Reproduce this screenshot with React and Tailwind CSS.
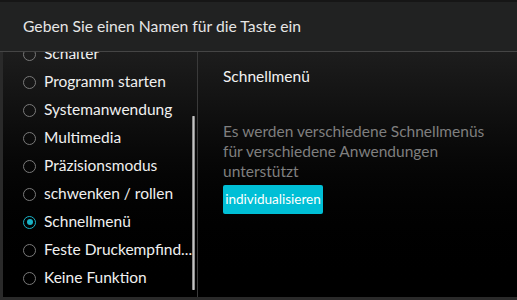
import React from "react";

const items = [
  "Schalter",
  "Programm starten",
  "Systemanwendung",
  "Multimedia",
  "Präzisionsmodus",
  "schwenken / rollen",
  "Schnellmenü",
  "Feste Druckempfind...",
  "Keine Funktion",
];

function Radio({ checked }) {
  return (
    <span
      className={`flex items-center justify-center w-[13px] h-[13px] rounded-full border-[1.5px] ${
        checked ? "border-[#1ab3c6]" : "border-[#7a7a7a]"
      }`}
    >
      {checked && <span className="w-[6px] h-[6px] rounded-full bg-[#1ab3c6]" />}
    </span>
  );
}

export default function App() {
  return (
    <div
      className="w-[517px] h-[300px] bg-[#2a2a2a] flex flex-col overflow-hidden text-[15.5px]"
      style={{ fontFamily: 'Lato, "Noto Sans", sans-serif' }}
    >
      <div className="h-[52px] shrink-0 bg-[#212222] border-t-2 border-[#161616] border-b border-b-[#454545] flex items-center pl-[23px] text-[#e6e6e6] text-[15.7px]">
        Geben Sie einen Namen für die Taste ein
      </div>
      <div className="flex-1 flex ml-[3px] mb-[3px] bg-gradient-to-b from-[#1d1d1d] to-[#000000] min-h-0">
        <div className="w-[195px] shrink-0 relative overflow-hidden border-r border-[#3a3a3a]">
          <div className="mt-[-12px] flex flex-col">
            {items.map((t) => (
              <div key={t} className="h-[28px] flex items-center pl-[20px] gap-[8px] text-[#f0f0f0] whitespace-nowrap">
                <Radio checked={t === "Schnellmenü"} />
                <span className="leading-none">{t}</span>
              </div>
            ))}
          </div>
          <div className="absolute left-[189px] top-[64px] w-[3px] h-[174px] rounded-[1px] bg-[#c4c4c4] border-x border-[#8a8a8a]" />
        </div>
        <div className="flex-1 flex flex-col pl-[25px] pt-[14px]">
          <div className="text-[#f2f2f2] h-[20px] leading-[20px]">Schnellmenü</div>
          <div className="mt-[35px] text-[#7f7f7f] leading-[20px]">
            Es werden verschiedene Schnellmenüs
            <br />
            für verschiedene Anwendungen
            <br />
            unterstützt
          </div>
          <button className="mt-[4px] w-[100px] h-[29px] bg-[#00bfd6] rounded-[2px] text-white text-[13.5px] flex items-center justify-center">
            individualisieren
          </button>
        </div>
      </div>
    </div>
  );
}
